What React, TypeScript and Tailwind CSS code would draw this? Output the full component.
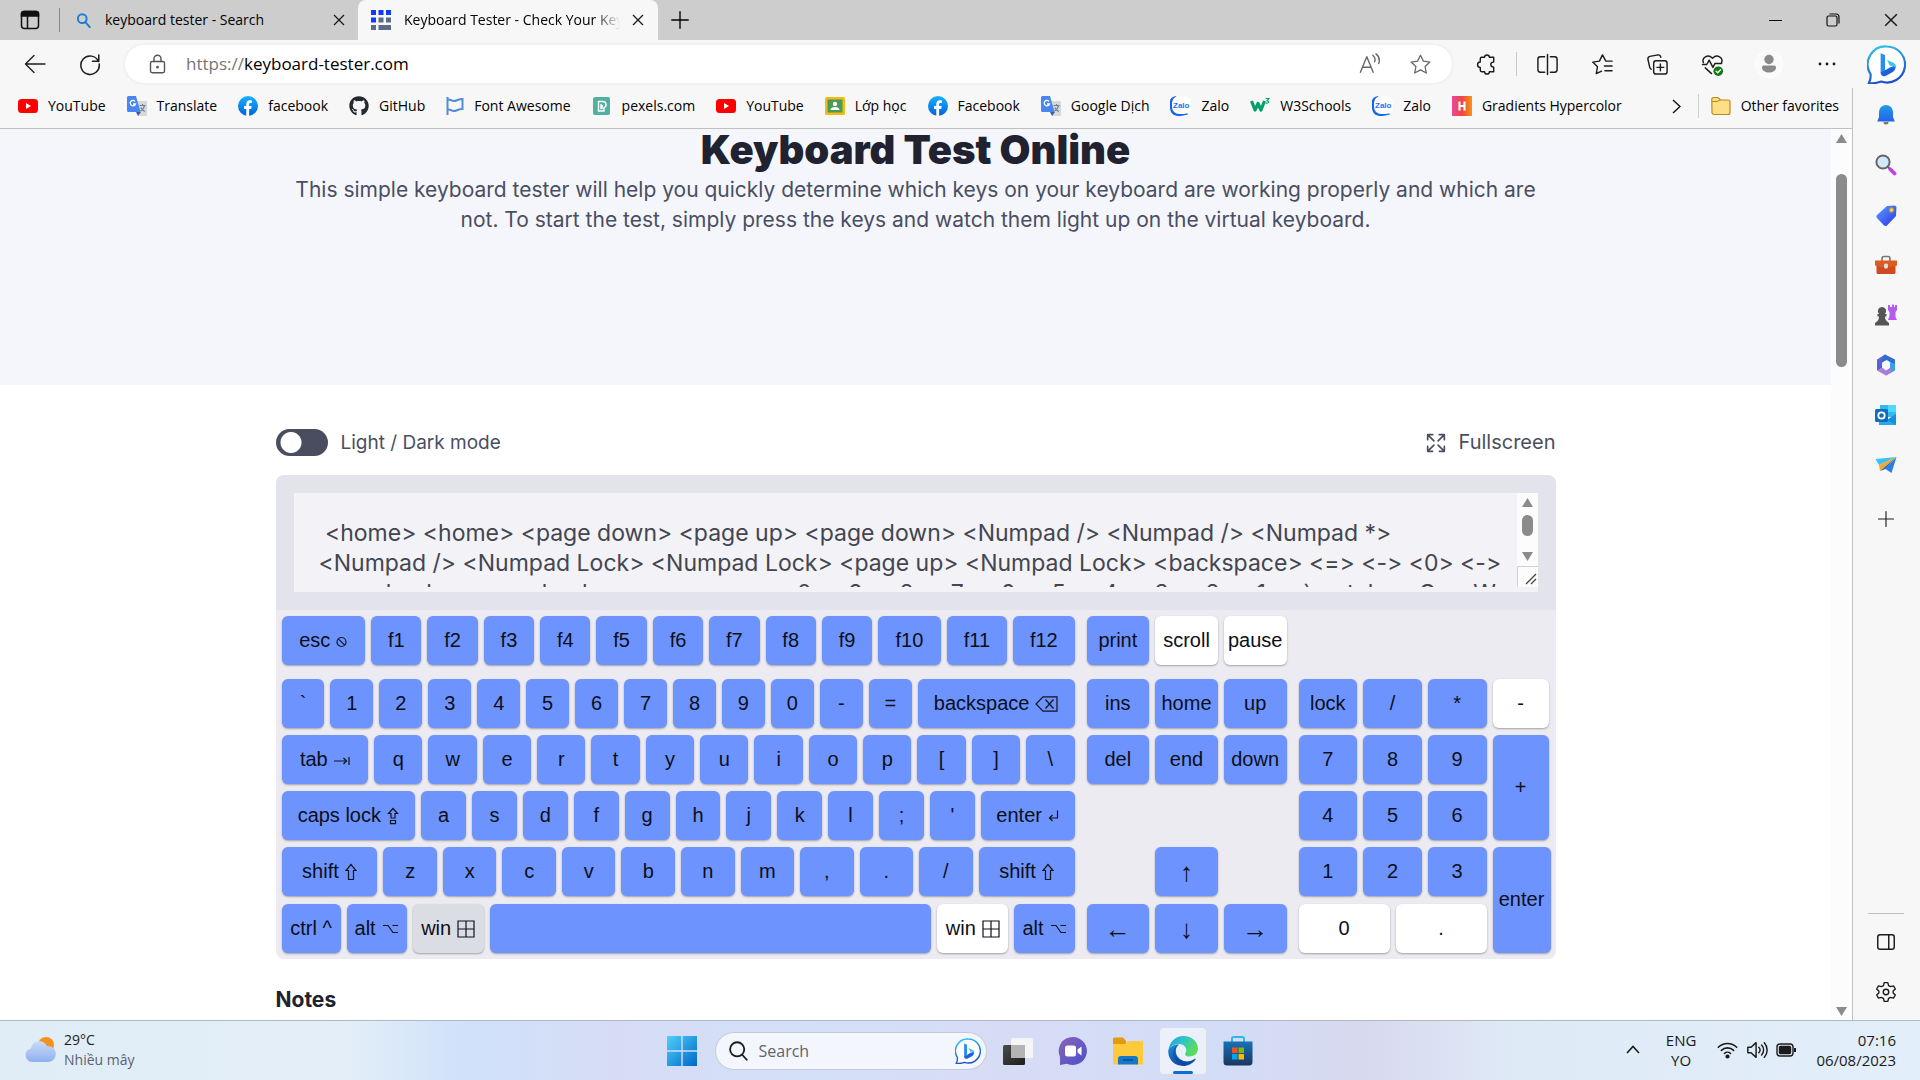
import React from "react";
import { FaGithub } from "react-icons/fa";

type Tone = "on" | "off" | "held";

const Stroke = ({ size = 24, w = 1.5, children, className = "" }: { size?: number; w?: number; children: React.ReactNode; className?: string }) => (
  <svg width={size} height={size} viewBox="0 0 24 24" fill="none" stroke="currentColor" strokeWidth={w} strokeLinecap="round" strokeLinejoin="round" className={"shrink-0 " + className} aria-hidden="true">
    {children}
  </svg>
);

/* ---------- key symbols ---------- */
const Sym = ({ w, h, children, s = 1.2 }: { w: number; h: number; children: React.ReactNode; s?: number }) => (
  <svg width={w} height={h} viewBox={`0 0 ${w} ${h}`} fill="none" stroke="#10131c" strokeWidth={s} className="shrink-0" aria-hidden="true">
    {children}
  </svg>
);
const symbols: Record<string, React.ReactNode> = {
  esc: <Sym w={11} h={14}><circle cx="5.5" cy="8" r="4.5" /><path d="M2.3 4.8l6.4 6.4" /></Sym>,
  back: <Sym w={23} h={16}><path d="M8 .8h14v14.400H8L1 8zM10.500 3.500l8 9M18.500 3.500l-8 9" /></Sym>,
  tab: <Sym w={16} h={12}><path d="M0 7h12.500M9.500 4l3 3-3 3M15 3v8" /></Sym>,
  caps: <Sym w={12} h={18}><path d="M6 1.500L1.500 6.500h2.500v4.500h4V6.500h2.500zM3.500 13.500h5v3.200h-5z" /></Sym>,
  shift: <Sym w={12} h={18}><path d="M6 1.500L1 7.500h2.500v9h5v-9H11z" /></Sym>,
  enter: <Sym w={11} h={14}><path d="M9.500 1.500V9H1.500M4.500 6l-3 3 3 3" /></Sym>,
  alt: <Sym w={17} h={12}><path d="M1 2.500h5l5 7h5M10.500 2.500H16" /></Sym>,
  win: <Sym w={18} h={18}><path d="M1 1h16v16H1zM9 1v16M1 9h16" /></Sym>,
};

const tones: Record<Tone, string> = {
  on: "bg-[#6d93ff]",
  off: "bg-white",
  held: "bg-[#dbdde4]",
};

type K = { t?: string; i?: string; tone?: Tone; cls?: string; label?: string; arrow?: boolean };

const Key = ({ t, i, tone = "on", cls = "h-[49px]", label, arrow }: K) => (
  <button
    type="button"
    aria-label={label}
    className={`flex min-w-0 items-center justify-center gap-[6px] whitespace-nowrap rounded-md text-xl leading-6 text-[#0c0f18] shadow-[0_1px_2px_rgba(0,0,0,0.32)] ${tones[tone]} ${cls}`}
  >
    {t ? <span className={arrow ? "text-[26px]" : "pb-0.5"}>{t}</span> : null}
    {i ? symbols[i] : null}
  </button>
);

const keys = (s: string): K[] => s.split(" ").map((t) => ({ t }));

const mainRows: { grid: string; keys: K[] }[] = [
  { grid: "grid-cols-[83fr_repeat(9,50fr)_62fr_60fr_61fr] mb-[7px]", keys: [{ t: "esc", i: "esc" }, ...keys("f1 f2 f3 f4 f5 f6 f7 f8 f9 f10 f11 f12")] },
  { grid: "grid-cols-[repeat(13,43fr)_157fr]", keys: [...keys("` 1 2 3 4 5 6 7 8 9 0 - ="), { t: "backspace", i: "back" }] },
  { grid: "grid-cols-[86fr_repeat(13,48fr)]", keys: [{ t: "tab", i: "tab" }, ...keys("q w e r t y u i o p [ ] \\")] },
  { grid: "grid-cols-[134fr_repeat(11,45fr)_94fr]", keys: [{ t: "caps lock", i: "caps" }, ...keys("a s d f g h j k l ; '"), { t: "enter", i: "enter" }] },
  { grid: "grid-cols-[95fr_repeat(10,53fr)_95fr]", keys: [{ t: "shift", i: "shift" }, ...keys("z x c v b n m , . /"), { t: "shift", i: "shift" }] },
  {
    grid: "grid-cols-[59fr_60fr_71fr_441fr_71fr_60fr] mt-px",
    keys: [
      { t: "ctrl ^" },
      { t: "alt", i: "alt" },
      { t: "win", i: "win", tone: "held" },
      { label: "space" },
      { t: "win", i: "win", tone: "off" },
      { t: "alt", i: "alt" },
    ],
  },
];

const Keyboard = () => (
  <div className="grid grid-cols-[793fr_200fr_252fr] gap-x-3 rounded-b-lg bg-[#ebebf1] pb-1.5 pl-1.5 pr-[5px] pt-1.5 font-['Liberation_Sans',sans-serif]">
    <div className="flex flex-col gap-[7px]">
      {mainRows.map((r, n) => (
        <div key={n} className={"grid gap-1.5 " + r.grid}>
          {r.keys.map((k, j) => (
            <Key key={j} {...k} />
          ))}
        </div>
      ))}
    </div>
    <div className="flex flex-col gap-[7px]">
      <div className="mb-[7px] grid grid-cols-3 gap-1.5">
        <Key t="print" />
        <Key t="scroll" tone="off" />
        <Key t="pause" tone="off" />
      </div>
      <div className="grid grid-cols-3 gap-x-1.5 gap-y-[7px]">
        {keys("ins home up del end down").map((k) => (
          <Key key={k.t} {...k} />
        ))}
      </div>
      <div className="h-[49px]" />
      <div className="grid grid-cols-3 gap-x-1.5 gap-y-2">
        <Key t="↑" arrow cls="col-start-2 h-[49px]" />
        <Key t="←" arrow cls="col-start-1 h-[49px]" />
        <Key t="↓" arrow />
        <Key t="→" arrow />
      </div>
    </div>
    <div className="grid grid-cols-[59fr_58fr_59fr_58fr] gap-x-1.5 pt-[63px]">
      <div className="col-span-3 grid grid-cols-6 gap-x-1.5 gap-y-[7px]">
        {keys("lock / * 7 8 9 4 5 6 1 2 3").map((k) => (
          <Key key={k.t} {...k} cls="col-span-2 h-[49px]" />
        ))}
        <Key t="0" tone="off" cls="col-span-3 mt-px h-[49px]" />
        <Key t="." tone="off" cls="col-span-3 mt-px h-[49px]" />
      </div>
      <div className="flex flex-col gap-[7px]">
        <Key t="-" tone="off" cls="mr-0.5 h-[49px]" />
        <Key t="+" cls="mr-0.5 h-[105px]" />
        <Key t="enter" cls="h-[106px]" />
      </div>
    </div>
  </div>
);

/* ---------- logos ---------- */
const YouTube = () => (
  <svg width="20" height="20" viewBox="0 0 20 20" aria-hidden="true"><rect y="3" width="20" height="14" rx="3.500" fill="#f00" /><path d="M8 7l5 3-5 3z" fill="#fff" /></svg>
);
const Translate = () => (
  <svg width="20" height="20" viewBox="0 0 20 20" aria-hidden="true">
    <path d="M7 5h12a1 1 0 011 1v13a1 1 0 01-1 1h-8z" fill="#d8d8d8" />
    <path d="M9 16h5l-3 4z" fill="#3b5bb5" />
    <path d="M1.500 0H9l4.500 16h-12A1.500 1.500 0 010 14.500v-13A1.500 1.500 0 011.500 0z" fill="#4a86f0" />
    <path d="M8 5.400A2.700 2.700 0 108.500 8H6" fill="none" stroke="#fff" strokeWidth="1.300" />
    <path d="M12.500 9.500h6M15.500 8v1.500M17.500 9.500c-.5 2.500-2 4.500-4 5.500M13.800 11.500c.7 1.800 2 3 4 4" fill="none" stroke="#6b7f95" strokeWidth="1.200" />
  </svg>
);
const Facebook = () => (
  <svg width="20" height="20" viewBox="0 0 20 20" aria-hidden="true">
    <defs><linearGradient id="fb" x1="0" y1="0" x2="0" y2="1"><stop offset="0" stopColor="#19b0fd" /><stop offset="1" stopColor="#0062e0" /></linearGradient></defs>
    <circle cx="10" cy="10" r="10" fill="url(#fb)" />
    <path d="M8.300 20v-7H6v-3h2.300V8.200c0-2.600 1.300-3.900 3.700-3.900.8 0 1.400.1 1.800.2V7h-1.400c-1 0-1.300.6-1.300 1.400V10h2.600l-.5 3h-2.100v7z" fill="#fff" />
  </svg>
);
const Flag = () => (
  <svg width="18" height="20" viewBox="0 0 18 20" fill="none" stroke="#538dd7" strokeWidth="2" aria-hidden="true"><path d="M1.500 1v18M2.500 3.500c2 0 3 1.500 5.500 1.500s4-2 8.500-2v10c-4.500 0-6 2-8.500 2s-3.500-1.500-5.500-1.500" /></svg>
);
const Pexels = () => (
  <svg width="20" height="20" viewBox="0 0 20 20" aria-hidden="true"><rect x="1" y="1" width="17" height="18" rx="2" fill="#52b0a0" /><path d="M6.500 5.500h4.500a3.200 3.200 0 011 6.200V15H6.500zM9 8v4.500h1V9.800h1" fill="none" stroke="#fff" strokeWidth="1.400" /></svg>
);
const Classroom = () => (
  <svg width="20" height="20" viewBox="0 0 20 20" aria-hidden="true"><rect y="1" width="20" height="18" rx="1.500" fill="#f5ba15" /><rect x="2.500" y="3.500" width="15" height="13" fill="#4a9b53" /><circle cx="10" cy="8" r="2.200" fill="#fff" /><path d="M5.500 14c0-2 2-3 4.500-3s4.500 1 4.500 3z" fill="#fff" /></svg>
);
const Zalo = () => (
  <svg width="21" height="20" viewBox="0 0 21 20" aria-hidden="true"><path d="M6 0C-1 1-.5 6 0 10c-.5 8 5 11 12 9.800l6-1.300" fill="#1565e8" /><rect x="2" y="0" width="19" height="18" rx="7" fill="#fff" /><text x="3" y="12" fontSize="8" fontWeight="700" fontFamily="Liberation Sans, sans-serif" fill="#1a73f0">Zalo</text></svg>
);
const W3 = () => (
  <svg width="20" height="20" viewBox="0 0 20 20" fill="none" aria-hidden="true"><path d="M1.500 5l3.500 9 3-6.500 3 6.500 3.500-9" stroke="#04a06a" strokeWidth="3.200" strokeLinejoin="round" /><path d="M15.500 2.500H19l-2 2.200c2.500 0 2.500 3-1.500 2.300" stroke="#04a06a" strokeWidth="1.100" /></svg>
);
const Hyper = () => (
  <svg width="20" height="20" viewBox="0 0 20 20" aria-hidden="true"><defs><linearGradient id="hy"><stop offset="0" stopColor="#e84a9b" /><stop offset=".5" stopColor="#ef4444" /><stop offset="1" stopColor="#f59512" /></linearGradient></defs><rect width="20" height="20" fill="url(#hy)" /><path d="M7.500 5.500v9M12.500 5.500v9M7.500 10h5" stroke="#fff" strokeWidth="2.200" /></svg>
);
const Folder = () => (
  <svg width="20" height="20" viewBox="0 0 20 20" aria-hidden="true"><path d="M.8 3A1.800 1.800 0 012.500 1.500H7L9.500 4H17a2 2 0 012 2v10.500a2 2 0 01-2 2H3a2 2 0 01-2-2z" fill="#ffdf85" stroke="#b98a1d" strokeWidth="1.200" /><path d="M1 5.500h5.500L9 4" fill="#f5bb22" stroke="#b98a1d" strokeWidth="1" /></svg>
);
const Bing = ({ size }: { size: number }) => (
  <svg width={size} height={size} viewBox="0 0 40 40" aria-hidden="true">
    <defs><linearGradient id="bg" x1="0" y1="0" x2=".3" y2="1"><stop offset="0" stopColor="#2fc9ee" /><stop offset="1" stopColor="#1c4fd0" /></linearGradient></defs>
    <path d="M20.500 1.500a18.500 18.500 0 11-6 36c-4 1.500-8.500 2-12.500 1.500 1.500-3 2-5.500 1.700-9A18.500 18.500 0 0120.500 1.500z" fill="#fff" stroke="url(#bg)" strokeWidth="2.200" />
    <path d="M14 8.500l4.500 1.800v16.200L14 29z" fill="#2a8df0" />
    <path d="M14 28.500l4.500-2.500 5.500-3.200 5.500-1.800c0 4-1.500 6-4 7.300l-6.500 3.500c-2.500 1-5-.5-5-3.300z" fill="#1c62e0" />
    <path d="M20.500 15.500l6.500 2.800c2 1 3 3 2.500 5.500-2-2-4-2.500-6-2.500z" fill="#33c8e8" />
  </svg>
);

const bookmarks: { icon: React.ReactNode; label: string }[] = [
  { icon: <YouTube />, label: "YouTube" },
  { icon: <Translate />, label: "Translate" },
  { icon: <Facebook />, label: "facebook" },
  { icon: <FaGithub size={20} color="#24292f" />, label: "GitHub" },
  { icon: <Flag />, label: "Font Awesome" },
  { icon: <Pexels />, label: "pexels.com" },
  { icon: <YouTube />, label: "YouTube" },
  { icon: <Classroom />, label: "Lớp học" },
  { icon: <Facebook />, label: "Facebook" },
  { icon: <Translate />, label: "Google Dịch" },
  { icon: <Zalo />, label: "Zalo" },
  { icon: <W3 />, label: "W3Schools" },
  { icon: <Zalo />, label: "Zalo" },
  { icon: <Hyper />, label: "Gradients Hypercolor" },
];

const IconBtn = ({ label, className = "", children }: { label: string; className?: string; children: React.ReactNode }) => (
  <button type="button" aria-label={label} className={"flex shrink-0 items-center justify-center " + className}>{children}</button>
);

const CloseX = ({ size = 12 }: { size?: number }) => (
  <svg width={size} height={size} viewBox="0 0 12 12" stroke="#1a1a1a" strokeWidth="1.300" aria-hidden="true"><path d="M1 1l10 10M11 1L1 11" /></svg>
);

const TabStrip = () => (
  <header className="flex h-10 shrink-0 items-center bg-[#cdcdcd] text-sm text-black">
    <IconBtn label="Tab actions" className="w-[59px]">
      <svg width="20" height="20" viewBox="0 0 20 20" fill="none" stroke="#111" strokeWidth="1.500" aria-hidden="true"><rect x="1.500" y="1.500" width="17" height="17" rx="3" /><path d="M1.500 3.500a2 2 0 012-2h13a2 2 0 012 2V6h-17z" fill="#111" /><path d="M7.500 6v12" /></svg>
    </IconBtn>
    <div className="h-6 w-px bg-[#888]" />
    <div className="flex h-10 w-[298px] items-center pl-4 pr-[13px]">
      <Stroke size={15} w={3} className="mr-3.5 text-[#1a7ad4]"><circle cx="10" cy="9" r="7" /><path d="M15 14.500l7 8" /></Stroke>
      <span className="flex-1 whitespace-nowrap">keyboard tester - Search</span>
      <IconBtn label="Close tab"><CloseX /></IconBtn>
    </div>
    <div className="flex h-10 w-[300px] items-center rounded-t-lg bg-[#f7f7f7] pl-[13px] pr-3.5">
      <svg width="20" height="20" viewBox="0 0 20 20" className="mr-[13px] shrink-0" aria-hidden="true">
        <g fill="#1038ff"><path d="M0 0h5v5H0zM7.500 0h5v5h-5zM15 0h5v5h-5zM0 7.500h5v5H0z" /></g>
        <g fill="#5c6b8a"><path d="M7.500 7.500h5v5h-5zM15 7.500h5v5h-5zM0 15h5v5H0zM7.500 15H20v5H7.500z" /></g>
      </svg>
      <span className="min-w-0 flex-1 whitespace-nowrap [mask-image:linear-gradient(to_right,#000_88%,transparent)]">Keyboard Tester - Check Your Key</span>
      <IconBtn label="Close tab" className="ml-3"><CloseX /></IconBtn>
    </div>
    <IconBtn label="New tab" className="w-11"><Stroke size={22} w={1.5}><path d="M12 3v18M3 12h18" /></Stroke></IconBtn>
    <div className="flex-1" />
    <IconBtn label="Minimize" className="w-[58px]"><svg width="13" height="13" stroke="#111" aria-hidden="true"><path d="M0 6.500h13" /></svg></IconBtn>
    <IconBtn label="Restore" className="w-[58px]"><svg width="14" height="14" viewBox="0 0 14 14" fill="none" stroke="#111" strokeWidth="1.200" aria-hidden="true"><rect x="1" y="3" width="10" height="10" rx="1.500" /><path d="M3.500 1h6.500a3 3 0 013 3v6.500" /></svg></IconBtn>
    <IconBtn label="Close" className="w-[58px]"><CloseX size={14} /></IconBtn>
  </header>
);

const Toolbar = () => (
  <div className="flex h-12 shrink-0 items-center bg-[#f7f7f7] pl-[7px] pr-[3px] text-[#1c1c1c]">
    <IconBtn label="Back" className="w-14"><Stroke size={24} w={1.4}><path d="M22 12H2.500M11 3.500L2.500 12l8.500 8.500" /></Stroke></IconBtn>
    <IconBtn label="Refresh" className="mr-[9px] w-[53px]"><Stroke size={24} w={1.5}><path d="M20.500 9.500A9.200 9.200 0 1021.200 12M20.800 3v6.300h-6.300" /></Stroke></IconBtn>
    <div className="flex h-[38px] min-w-0 flex-1 items-center rounded-full bg-white pl-[22px] pr-5 shadow-[0_0_4px_rgba(0,0,0,0.08)]">
      <Stroke size={21} w={1.6} className="mr-[18px] text-[#555]"><rect x="4" y="8.500" width="16" height="13" rx="2" /><path d="M8 8.500V5.500a4 4 0 018 0v3" /><circle cx="12" cy="15" r=".8" fill="currentColor" /></Stroke>
      <label className="relative min-w-0 flex-1 text-[17px] leading-6">
        <span className="pointer-events-none absolute inset-0 whitespace-nowrap text-black" aria-hidden="true"><span className="text-[#757575]">https://</span>keyboard-tester.com</span>
        <input aria-label="Address" defaultValue="https://keyboard-tester.com" className="block w-full bg-transparent text-transparent outline-none" />
      </label>
      <IconBtn label="Read aloud" className="mr-7"><Stroke size={22} w={1.5} className="text-[#666]"><path d="M1.500 21L8.500 4l7 17M4 15.500h9M15 2.500c2.500 2 2.800 5 2 7M18.500 1c4 3 4 7.500 3 10.500" /></Stroke></IconBtn>
      <IconBtn label="Add to favorites"><Stroke size={23} w={1.3} className="text-[#666]"><path d="M12 2.300l3 6.200 6.800.9-5 4.700 1.300 6.800-6.100-3.300-6.100 3.300 1.300-6.800-5-4.700 6.800-.9z" /></Stroke></IconBtn>
    </div>
    <IconBtn label="Extensions" className="ml-1.5 w-14"><Stroke size={23} w={1.5}><path d="M7 4.500h3a2.500 2.500 0 015 0h4.500V9a.5.5 0 01-.5.500 2.500 2.500 0 000 5 .5.500 0 01.5.500v4.500H15a2.500 2.500 0 01-5 0H7a1.500 1.500 0 01-1.500-1.500v-3a2.800 2.800 0 010-5.600V6A1.500 1.500 0 017 4.500z" /></Stroke></IconBtn>
    <div className="mx-0.5 h-6 w-px bg-[#c8c8c8]" />
    <IconBtn label="Split screen" className="w-14"><Stroke size={23} w={1.5}><path d="M9 4H4.500A2.500 2.500 0 002 6.500v11A2.500 2.500 0 004.500 20H9M15 4h4.500A2.500 2.500 0 0122 6.500v11a2.500 2.500 0 01-2.500 2.500H15M12 1.500v21" /></Stroke></IconBtn>
    <IconBtn label="Favorites" className="w-[55px]"><Stroke size={23} w={1.5}><path d="M22 8.500h-6.500L12 2 8.800 8.500l-7 1 5 4.800-1.300 7.200L11 19M14 13.500h8M14.500 18.500H22" /></Stroke></IconBtn>
    <IconBtn label="Collections" className="w-[55px]"><Stroke size={23} w={1.5}><rect x="8" y="8" width="14" height="14" rx="2.500" /><path d="M15 11.500v7M11.500 15h7M5.500 17c-1-.5-1.500-1.500-1.700-2.500L2 6.500C1.800 5 2.500 4 4 3.500L12.500 2c1.500-.2 2.500.5 3 2.500" /></Stroke></IconBtn>
    <IconBtn label="Browser essentials" className="w-[55px]"><Stroke size={23} w={1.5}><path d="M2.500 10C.5 5 7 .500 12 5.500 17 .500 23.500 5 21.500 10M4.500 15.500L11 21.500M1.500 12H6l2.500-4.500 4 7.500 2-4h7" /><circle cx="18" cy="19" r="5" fill="#0f7b0f" stroke="none" /><path d="M15.800 19l1.600 1.600 3-3" stroke="#fff" /></Stroke></IconBtn>
    <IconBtn label="Profile" className="w-[58px]"><svg width="28" height="28" viewBox="0 0 28 28" aria-hidden="true"><circle cx="14" cy="14" r="13.500" fill="#fafafa" stroke="#fff" /><circle cx="14" cy="9.500" r="4.700" fill="#8a8a8a" /><path d="M7 17.500c0-1.500 1-2 2-2h10c1 0 2 .5 2 2 0 3.500-3.500 5-7 5s-7-1.500-7-5z" fill="#8a8a8a" /></svg></IconBtn>
    <IconBtn label="Settings and more" className="w-[57px]"><svg width="18" height="4" fill="#1a1a1a" aria-hidden="true"><circle cx="2" cy="2" r="1.400" /><circle cx="9" cy="2" r="1.400" /><circle cx="16" cy="2" r="1.400" /></svg></IconBtn>
    <IconBtn label="Bing Chat" className="w-[62px]"><Bing size={39} /></IconBtn>
  </div>
);

const Bookmarks = () => (
  <nav className="flex h-10 shrink-0 items-center bg-[#f7f7f7] pb-1 pl-[18px] pr-[13px] text-sm text-black">
    <div className="flex flex-1 gap-[21px]">
      {bookmarks.map((b, n) => (
        <a key={n} href="#" className="flex items-center gap-2.5 whitespace-nowrap">{b.icon}{b.label}</a>
      ))}
    </div>
    <IconBtn label="More favorites" className="mr-[17px]"><svg width="9" height="15" fill="none" stroke="#111" strokeWidth="1.400" aria-hidden="true"><path d="M1 1l7 6.500-7 6.500" /></svg></IconBtn>
    <div className="mr-3 h-6 w-px bg-[#d0d0d0]" />
    <a href="#" className="flex items-center gap-2.5 whitespace-nowrap"><Folder />Other favorites</a>
  </nav>
);

const log = ` <home> <home> <page down> <page up> <page down> <Numpad /> <Numpad /> <Numpad *>
<Numpad /> <Numpad Lock> <Numpad Lock> <page up> <Numpad Lock> <backspace> <=> <-> <0> <->
<=> <backspace> <backspace> <=> <-> <0> <9> <8> <7> <6> <5> <4> <3> <2> <1> <\`> <tab> <Q> <W> <E>`;

const Tri = ({ down = false }: { down?: boolean }) => (
  <svg width="11" height="9" viewBox="0 0 11 9" fill="#8b8b8b" className="shrink-0" aria-hidden="true">{down ? <path d="M0 0h11L5.500 9z" /> : <path d="M0 9h11L5.500 0z" />}</svg>
);

const Page = () => (
  <div className="flex min-h-0 flex-1">
    <main className="min-w-0 flex-1 overflow-hidden bg-white font-[Inter,sans-serif]">
      <section className="h-64 bg-[#f5f6fb] text-center text-[#4a4e62]">
        <h1 className="mb-1 text-[40px] font-black leading-[42px] text-[#20222f]">Keyboard Test Online</h1>
        <p className="text-[21px] leading-[30px]">
          This simple keyboard tester will help you quickly determine which keys on your keyboard are working properly and which are<br />
          not. To start the test, simply press the keys and watch them light up on the virtual keyboard.
        </p>
      </section>
      <div className="mx-auto max-w-7xl pt-11">
        <div className="mb-[19px] flex items-center justify-between text-[19px] leading-[27px] text-[#4a4e62]">
          <label className="flex items-center gap-[13px]">
            <input type="checkbox" role="switch" className="h-[27px] w-[52px] appearance-none rounded-full bg-[#4a4d60] bg-[radial-gradient(circle_at_15px_50%,white_10px,transparent_11px)]" />
            Light / Dark mode
          </label>
          <button type="button" className="flex items-center gap-[13px] text-xl leading-[27px]">
            <Stroke size={20} w={2}><path d="M2 8V2h6M2.500 2.500l7 7M22 8V2h-6M21.500 2.500l-7 7M2 16v6h6M2.500 21.500l7-7M22 16v6h-6M21.500 21.500l-7-7" /></Stroke>
            Fullscreen
          </button>
        </div>
        <div className="rounded-t-lg bg-[#e2e3eb] p-[18px]">
          <div className="flex bg-[#f2f2f7] pb-[5px]">
            <textarea readOnly aria-label="Pressed keys" value={log} wrap="off" className="block h-[94px] min-w-0 flex-1 resize-none overflow-hidden bg-transparent pl-[25px] pt-[25px] text-[23px] leading-[30px] text-[#43454f] outline-none [font-feature-settings:'calt'_0]" />
            <div className="flex w-[21px] flex-col items-center bg-[#fcfcfc] pt-[5px]" aria-hidden="true">
              <Tri />
              <div className="mb-4 mt-2 h-[21px] w-[11px] rounded-full bg-[#8b8b8b]" />
              <Tri down />
              <svg width="21" height="21" className="mt-auto" fill="none" aria-hidden="true"><path d="M.5 21V.5H21" stroke="#d0d0d0" /><path d="M9 18l10-10M14 18l5-5" stroke="#444" strokeWidth="1.300" /></svg>
            </div>
          </div>
        </div>
        <Keyboard />
        <h2 className="mt-[26px] text-[21px] font-bold leading-[30px] text-[#20222f]">Notes</h2>
      </div>
    </main>
    <div className="flex w-[21px] shrink-0 flex-col items-center bg-[#fcfcfc] pb-1 pt-[5px]" aria-hidden="true">
      <Tri />
      <div className="mt-[31px] h-[193px] w-[11px] rounded-full bg-[#8b8b8b]" />
      <div className="flex-1" />
      <Tri down />
    </div>
  </div>
);

const sideIcons: { label: string; art: React.ReactNode }[] = [
  { label: "Notifications", art: <><defs><linearGradient id="s1" x1="0" y1="0" x2="0" y2="1"><stop offset="0" stopColor="#1f9ce8" /><stop offset="1" stopColor="#2563e8" /></linearGradient></defs><path d="M8.500 18h5a2.500 2.500 0 01-5 0z" fill="#777" /><path d="M11 1a7 7 0 017 7v5l1.800 4.500H2.200L4 13V8a7 7 0 017-7z" fill="url(#s1)" /></> },
  { label: "Search", art: <><path d="M13 13l2.500 2.500" stroke="#666" strokeWidth="2.400" /><path d="M15.500 15.500l4 4" stroke="#c23cf0" strokeWidth="3.800" strokeLinecap="round" /><circle cx="8" cy="8" r="6.600" fill="#cfeaf8" stroke="#666" strokeWidth="2" /></> },
  { label: "Shopping", art: <><defs><linearGradient id="s3" x1="0" y1="0" x2="1" y2="1"><stop offset="0" stopColor="#5aa2ff" /><stop offset="1" stopColor="#2f30e8" /></linearGradient></defs><path d="M12 2l8-.5 1.500 1.500-.5 9-9 9.500c-1 .8-2 .5-3 0l-7-7.500c-1-1-.8-2 0-3z" fill="url(#s3)" /><circle cx="16.500" cy="6" r="2.200" fill="#f7d23c" stroke="#c79a10" /></> },
  { label: "Tools", art: <><path d="M7 7V4.500C7 3 8 2.500 9 2.500h4c1.500 0 2 1 2 2V7" fill="none" stroke="#777" strokeWidth="1.600" /><path d="M1.500 11h19v7.500c0 .8-.5 1.500-1.500 1.500H3c-1 0-1.500-.7-1.500-1.500z" fill="#cf4b1f" /><path d="M0 6.500h22v5c-7 2-15 2-22 0z" fill="#dd5a20" /><rect x="9" y="9.500" width="4" height="5" rx="1.500" fill="#ddd" /></> },
  { label: "Games", art: <><path d="M13 1h2v2h2V.5h2V3h1V1h2v5l-1.500 2v5l1.500 3h-9l1.500-4V8L13 6z" fill="#b45cf0" /><path d="M7 3a4 4 0 012.800 7h1.700v2.500H10c0 3 1 4.500 4 6.500v2.500H0V19c3-2 4-3.500 4-6.500H2.500V10h1.700A4 4 0 017 3z" fill="#555" /></> },
  { label: "Microsoft 365", art: <><defs><linearGradient id="s6" x1="0" y1="0" x2="1" y2="1"><stop offset="0" stopColor="#7d5fd8" /><stop offset="1" stopColor="#2b63d0" /></linearGradient></defs><path d="M10 .5L2 5.500v11l5-2.500V8.500L14 4z" fill="url(#s6)" /><path d="M10 .5l10 5v6l-5-3.500-3.500-2L7 8.500V4z" fill="#2f6fd0" /><path d="M20 10v6.500l-9 5-1-3 5-4.500V8z" fill="#3f9ee8" /><path d="M2 16.500L7 13.500l4 3 4-2.500 2 4-6 3.500z" fill="#a77ed8" /><circle cx="11" cy="11" r="3.800" fill="#f7f7f7" /></> },
  { label: "Outlook", art: <><rect x="5" y="1" width="16" height="12" fill="#35b8f1" /><path d="M13 1h8v7h-8z" fill="#50d9ff" /><path d="M4 21l17-11v11z" fill="#1490df" /><path d="M4 12l17 9H4z" fill="#28a8ea" /><rect x="0" y="5" width="13" height="13" rx="1.500" fill="#0f6cbd" /><circle cx="6.500" cy="11.500" r="3.200" fill="none" stroke="#fff" strokeWidth="1.800" /></> },
  { label: "Drop", art: <><path d="M.5 5L21.500 3 4 11z" fill="#3cc0f5" /><path d="M21.500 3l-5 16-6-4z" fill="#2b7de8" /><path d="M21.500 3L4 11l1 6z" fill="#f2a92c" /><path d="M21.500 3L5 17l5.500-2z" fill="#2563c8" /></> },
];

const Sidebar = () => (
  <aside className="flex w-[68px] shrink-0 flex-col items-center border-l border-[#c0c0c0] bg-[#f7f7f7] pb-1 pr-0.5 pt-0.5 text-[#1c1c1c]">
    {sideIcons.map((s) => (
      <IconBtn key={s.label} label={s.label} className="h-[50px] w-full"><svg width="22" height="22" viewBox="0 0 22 22" aria-hidden="true">{s.art}</svg></IconBtn>
    ))}
    <IconBtn label="Customize" className="h-[58px] w-full"><Stroke size={18} w={1.5}><path d="M12 2v20M2 12h20" /></Stroke></IconBtn>
    <div className="flex-1" />
    <div className="mb-[3px] h-px w-9 bg-[#c0c0c0]" />
    <IconBtn label="Hide sidebar" className="h-[50px] w-full"><Stroke size={22} w={1.6}><rect x="3" y="4" width="18" height="16" rx="2.500" /><path d="M15 4v16" /></Stroke></IconBtn>
    <IconBtn label="Settings" className="h-[49px] w-full"><Stroke size={22} w={1.5}><circle cx="12" cy="12" r="3" /><path d="M10 1.800h4l.8 3.200 2.200 1.200 3.200-.9 2 3.400-2.400 2.300v2l2.400 2.300-2 3.400-3.200-.9-2.200 1.200-.8 3.200h-4L9.200 19 7 17.800l-3.200.9-2-3.400 2.400-2.300v-2L1.800 8.700l2-3.400 3.200.9L9.200 5z" /></Stroke></IconBtn>
  </aside>
);

const Taskbar = () => (
  <footer className="grid h-[60px] shrink-0 grid-cols-[1fr_auto_1fr] items-center border-t border-[#b2b9c6] bg-[linear-gradient(90deg,#e0edf6_0%,#e3eef8_18%,#d0e1f9_24%,#d6dcf6_32%,#d4e0f8_42%,#d7dcf5_52%,#d3ddf7_63%,#d7d9ee_71%,#dfeaf7_79%,#e2eef9_100%)] text-sm text-[#1b1b1b]">
    <div className="flex items-center gap-2 pb-0.5 pl-6">
      <svg width="32" height="28" viewBox="0 0 32 28" aria-hidden="true">
        <defs><linearGradient id="cl" x1="0" y1="0" x2="0" y2="1"><stop offset="0" stopColor="#c8dcfa" /><stop offset="1" stopColor="#8fb0ec" /></linearGradient></defs>
        <circle cx="22" cy="9" r="8" fill="#f5901e" />
        <path d="M8 26a7 7 0 01-1-13.800A8.500 8.500 0 0123 10a8 8 0 011.500 16z" fill="url(#cl)" />
      </svg>
      <div className="leading-5"><div>29°C</div><div className="text-[#5b6270]">Nhiều mây</div></div>
    </div>
    <div className="flex items-center gap-[7px] pr-px">
      <IconBtn label="Start" className="h-12 w-12"><svg width="30" height="30" viewBox="0 0 30 30" aria-hidden="true"><defs><linearGradient id="st" x1="0" y1="0" x2="1" y2="1"><stop offset="0" stopColor="#4fd0fb" /><stop offset="1" stopColor="#0067c8" /></linearGradient></defs><path d="M0 0h14.300v14.300H0zM15.700 0H30v14.300H15.700zM0 15.700h14.300V30H0zM15.700 15.700H30V30H15.700z" fill="url(#st)" /></svg></IconBtn>
      <label className="ml-0.5 flex h-[38px] w-[272px] items-center rounded-full border border-[#c3cadb] bg-[#f3f6fd] pl-3 pr-[5px]">
        <Stroke size={20} w={2.2} className="mr-[11px]"><circle cx="11" cy="10" r="8.500" /><path d="M17 16.500l5.500 6" /></Stroke>
        <input aria-label="Search" placeholder="Search" className="min-w-0 flex-1 bg-transparent text-base outline-none placeholder:text-[#5f636b]" />
        <Bing size={26} />
      </label>
      <IconBtn label="Task view" className="h-12 w-12"><svg width="30" height="28" viewBox="0 0 30 28" aria-hidden="true"><defs><linearGradient id="tv" x1="0" y1="0" x2="1" y2="1"><stop offset="0" stopColor="#4a4a4a" /><stop offset="1" stopColor="#1c1c1c" /></linearGradient></defs><rect x="0" y="8" width="22" height="20" rx="1.500" fill="url(#tv)" /><rect x="8" y="1" width="22" height="20" rx="1.500" fill="#f5f5f5" /><path d="M8 8h14v13H8z" fill="#b4b4b4" /></svg></IconBtn>
      <IconBtn label="Chat" className="h-12 w-12"><svg width="30" height="30" viewBox="0 0 30 30" aria-hidden="true"><defs><linearGradient id="ch" x1="0" y1="0" x2="1" y2="1"><stop offset="0" stopColor="#8a64b8" /><stop offset="1" stopColor="#4a50c8" /></linearGradient></defs><path d="M15 1a14 14 0 11-6 26.700L2 29V21A14 14 0 0115 1z" fill="url(#ch)" /><rect x="7" y="9.500" width="11" height="11" rx="2.500" fill="#fff" /><path d="M19.500 13.500l4-3v9l-4-3z" fill="#fff" /></svg></IconBtn>
      <IconBtn label="File Explorer" className="h-12 w-12"><svg width="30" height="28" viewBox="0 0 30 28" aria-hidden="true"><path d="M0 2a1.500 1.500 0 011.500-1.500H10L13 4v6H0z" fill="#e39a0b" /><path d="M0 7h12l3-3h13.500A1.500 1.500 0 0130 5.500v20.500a1.500 1.500 0 01-1.500 1.500h-27A1.500 1.500 0 010 26z" fill="#ffc93c" /><path d="M5 27.500V22a3 3 0 013-3h14a3 3 0 013 3v5.500z" fill="#1478c8" /><path d="M10 23h10" stroke="#0b4f92" strokeWidth="1.600" /></svg></IconBtn>
      <div className="flex h-12 w-12 flex-col items-center rounded border border-[#d6dcea] bg-[#ebf0fa] pt-2">
        <IconBtn label="Microsoft Edge"><svg width="30" height="30" viewBox="0 0 30 30" aria-hidden="true">
          <defs><linearGradient id="e1" x1="0" y1="0" x2="1" y2=".4"><stop offset="0" stopColor="#1c9ee6" /><stop offset=".5" stopColor="#2fc5c8" /><stop offset="1" stopColor="#5bdc5c" /></linearGradient><linearGradient id="e2" x1="0" y1="0" x2="0" y2="1"><stop offset="0" stopColor="#1b90dd" /><stop offset="1" stopColor="#0d4da8" /></linearGradient></defs>
          <path d="M.5 14C1.500 6 7.500 0 15.500 0 24 0 30 6 30 12.500c0 5-4 8-8.500 8-3.500 0-5-1.500-4-3.500 2.500-4-1-9-6.500-9C5 8 1.500 11 .5 14z" fill="url(#e1)" />
          <path d="M.3 14.500C1.500 10.500 6 8 11 8.500c-3 2-4 6-2.500 10 2 5 8 8 13.500 6.500 2.500-.5 4-1.700 5-2.500.7 0 .8.500.5 1C25 27.500 20 30 15 30 6 30-.3 23 .3 14.500z" fill="url(#e2)" />
          <path d="M11 8.500c-6 4-4.500 13 2 16 5 2.300 10 1.500 14-1.500-2 4-7 6-11.500 6.500C8 28 3 20 6 13c1-2.500 3-4 5-4.500z" fill="#0f3f94" opacity=".55" />
        </svg></IconBtn>
        <div className="mt-auto h-[3px] w-5 rounded-full bg-[#0b6fd0]" />
      </div>
      <IconBtn label="Microsoft Store" className="h-12 w-12"><svg width="30" height="30" viewBox="0 0 30 30" aria-hidden="true"><defs><linearGradient id="ms" x1="0" y1="0" x2="0" y2="1"><stop offset="0" stopColor="#1672b8" /><stop offset="1" stopColor="#1d3560" /></linearGradient></defs><path d="M9 6V2.500C9 1.500 9.500 1 10.500 1h9c1 0 1.500.5 1.500 1.500V6" fill="none" stroke="#2fb5f0" strokeWidth="2" /><path d="M.5 5.500h29V26a3.500 3.500 0 01-3.500 3.500H4A3.500 3.500 0 01.5 26z" fill="url(#ms)" /><path d="M9 11.500h5.500V17H9z" fill="#f25022" /><path d="M15.500 11.500H21V17h-5.500z" fill="#7fba00" /><path d="M9 18h5.500v5.500H9z" fill="#00a4ef" /><path d="M15.500 18H21v5.500h-5.500z" fill="#ffb900" /></svg></IconBtn>
    </div>
    <div className="flex items-center justify-end pb-0.5 pr-6 text-[15px]">
      <IconBtn label="Show hidden icons" className="mr-[26px]"><svg width="14" height="9" fill="none" stroke="#1b1b1b" strokeWidth="1.600" aria-hidden="true"><path d="M1 8l6-6.500L13 8" /></svg></IconBtn>
      <div className="mr-[21px] text-center leading-5"><div>ENG</div><div>YO</div></div>
      <Stroke size={21} w={1.8} className="mr-2"><path d="M1.500 9.500a15 15 0 0121 0M5 13a10 10 0 0114 0M8.500 16.500a5 5 0 017 0" /><circle cx="12" cy="20" r="1.500" fill="currentColor" /></Stroke>
      <Stroke size={22} w={1.6} className="mr-2"><path d="M2 9v6h3.500L11 20V4L5.500 9zM14 9a4 4 0 010 6M17 6.500a8 8 0 010 11M20 4a12 12 0 010 16" /></Stroke>
      <svg width="20" height="14" viewBox="0 0 20 14" fill="none" stroke="#1b1b1b" strokeWidth="1.400" className="mr-5" aria-hidden="true"><rect x="1" y="1" width="16" height="12" rx="3" /><rect x="3.500" y="3.500" width="11" height="7" rx="1" fill="#1b1b1b" /><path d="M19 5v4" strokeWidth="2" /></svg>
      <div className="text-right leading-5"><div>07:16</div><div>06/08/2023</div></div>
    </div>
  </footer>
);

export default function App() {
  return (
    <div className="flex h-screen flex-col overflow-hidden bg-[#f7f7f7] font-['Open_Sans','Noto_Sans',sans-serif]">
      <TabStrip />
      <Toolbar />
      <div className="flex min-h-0 flex-1">
        <div className="flex min-w-0 flex-1 flex-col">
          <Bookmarks />
          <div className="h-px shrink-0 bg-[#bfbfbf]" />
          <Page />
        </div>
        <Sidebar />
      </div>
      <Taskbar />
    </div>
  );
}
